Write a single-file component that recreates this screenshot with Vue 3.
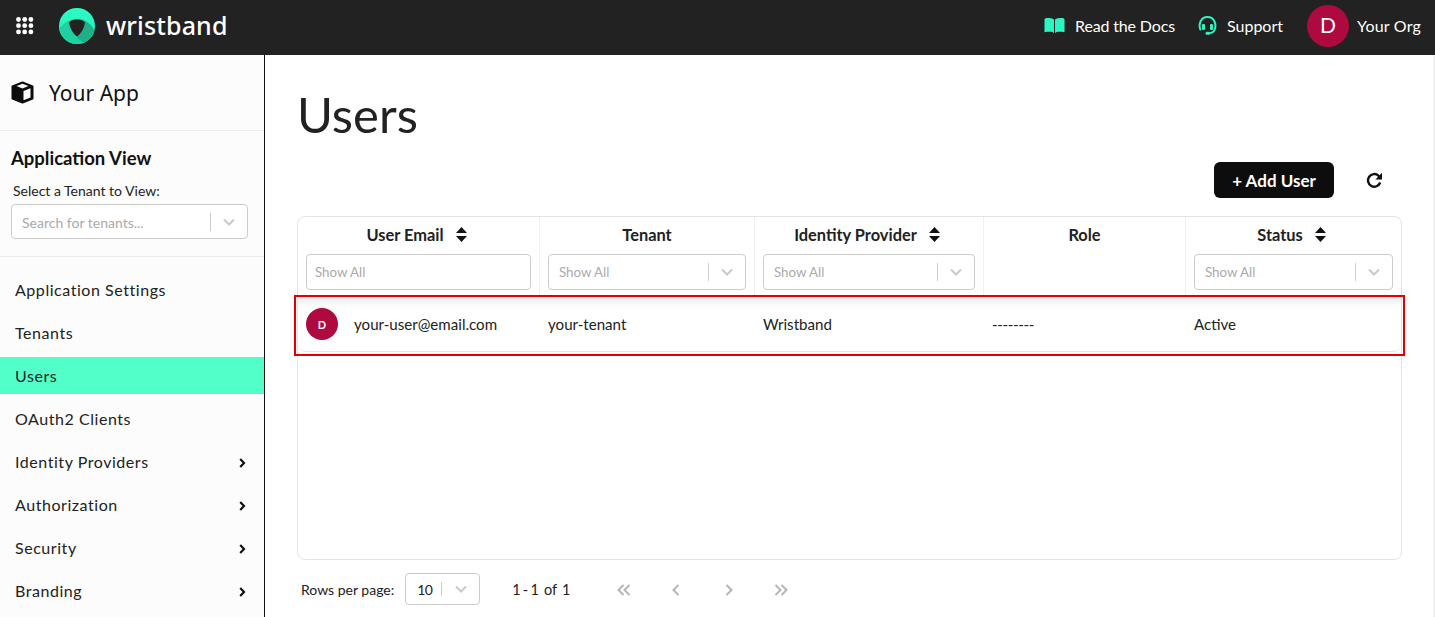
<script setup>
const nav = [
  { label: 'Application Settings' },
  { label: 'Tenants' },
  { label: 'Users', active: true },
  { label: 'OAuth2 Clients' },
  { label: 'Identity Providers', more: true },
  { label: 'Authorization', more: true },
  { label: 'Security', more: true },
  { label: 'Branding', more: true },
]
const dots = []
for (let y = 0; y < 3; y++) for (let x = 0; x < 3; x++) dots.push({ cx: 2.5 + x * 6.2, cy: 2.5 + y * 6.2 })
</script>

<template>
  <div class="page">
    <header class="topbar">
      <div class="brand">
        <svg class="grid" width="18" height="18" viewBox="0 0 18 18"><circle v-for="(d, i) in dots" :key="i" :cx="d.cx" :cy="d.cy" r="2.4" fill="#fff" /></svg>
        <svg class="logo" width="36" height="36" viewBox="0 0 36 36">
          <defs>
            <linearGradient id="lg" x1="0" y1="0" x2="0" y2="1"><stop offset="0" stop-color="#2bffc6" /><stop offset="1" stop-color="#27e6b4" /></linearGradient>
            <clipPath id="disc"><circle cx="18" cy="18" r="18" /></clipPath>
          </defs>
          <circle cx="18" cy="18" r="18" fill="url(#lg)" />
          <g clip-path="url(#disc)">
            <path d="M-1 24C3 15 10 11 18 11c4 0 7 1 10 3l8 12v12H-1z" fill="#1fd0a1" />
            <path d="M24 12c5 2 10 6 12 12v6c-2 3-5 5-9 6L18 30z" fill="#1eb088" />
          </g>
          <path d="M11 13.500c4-3 10-3 14 0 .8.600 1 1.300.8 2.300-1 5-3.500 9-7 12.300-.5.400-1.100.400-1.600 0-3.500-3.300-6-7.300-7-12.300-.2-1 0-1.700.8-2.300z" fill="#222" />
        </svg>
        <span class="wordmark">wristband</span>
      </div>
      <div class="actions">
        <span class="action docs">
          <svg width="21" height="15" viewBox="0 0 21 15"><path d="M.5 1.200C1 .4 2 0 3.500 0 6 0 8.500.3 10 1.500V15c-1-1-2.500-1.300-4-1.300-1.800 0-3.500 0-5.500.5zM20.500 1.200C20 .4 19 0 17.500 0 15 0 12.500.3 11 1.500V15c1-1 2.500-1.300 4-1.300 1.800 0 3.500 0 5.500.5z" fill="#2bf5c0" /></svg>
          Read the Docs
        </span>
        <span class="action support">
          <svg width="19" height="19" viewBox="0 0 19 19" fill="none" stroke="#2bf5c0" stroke-width="2"><path d="M2.300 13.500C.6 9 2 1 9.500 1s8.900 8 7.200 12.500c-.9 2.600-3 3.700-5.700 3.700" stroke-linecap="round" /><rect x="4" y="8" width="3" height="6" rx="1" fill="#2bf5c0" stroke="none" /><rect x="12" y="8" width="3" height="6" rx="1" fill="#2bf5c0" stroke="none" /><rect x="7.500" y="15.700" width="4.500" height="3" rx="1.500" fill="#2bf5c0" stroke="none" /></svg>
          Support
        </span>
        <span class="org"><span class="org-avatar">D</span><span class="org-name">Your Org</span></span>
      </div>
    </header>

    <div class="body">
      <aside class="sidebar">
        <div class="app-head">
          <svg width="23" height="23" viewBox="0 0 23 23"><path d="M11.500 1.500 21.500 5.500v12L11.500 21.500 1.500 17.500v-12z" fill="#0c0c0c" stroke="#0c0c0c" stroke-width="2" stroke-linejoin="round" /><path d="M11.500 2.800 17.500 5 11.500 7.400 5.500 5z" fill="#fcfcfc" /><path d="M12.500 10l7-2.800v9.300l-7 2.700z" fill="#fcfcfc" /></svg>
          <span>Your App</span>
        </div>
        <div class="view">
          <div class="view-title">Application View</div>
          <div class="view-label">Select a Tenant to View:</div>
          <div class="select tenant-select">
            <span class="ph">Search for tenants...</span>
            <i class="sep"></i>
            <svg class="chev" width="12" height="8" viewBox="0 0 12 8"><path d="M1 1.500l5 5 5-5" fill="none" stroke="#c9c9c9" stroke-width="2" /></svg>
          </div>
        </div>
        <nav class="nav">
          <div v-for="item in nav" :key="item.label" class="nav-item" :class="{ active: item.active }">
            <span>{{ item.label }}</span>
            <svg v-if="item.more" class="nav-chev" width="7" height="10" viewBox="0 0 7 10"><path d="M1.200 1l3.800 4-3.800 4" fill="none" stroke="#111" stroke-width="2.200" /></svg>
          </div>
        </nav>
      </aside>

      <main class="main">
        <h1 class="title">Users</h1>
        <div class="toolbar">
          <button class="add">+ Add User</button>
          <svg class="refresh" width="17" height="17" viewBox="0 0 17 17" fill="none"><path d="M14.200 10.500A6.300 6.300 0 1 1 12.600 3.800L14.600 5.600" stroke="#111" stroke-width="2.400" /><path d="M16 .8v6.600H9.400z" fill="#111" /></svg>
        </div>

        <div class="table">
          <div class="thead">
            <div class="th c1">
              <div class="th-label">User Email <svg class="sort" width="11" height="15" viewBox="0 0 11 15"><path d="M5.500 0 11 6H0zM5.500 15 0 9h11z" fill="#111" /></svg></div>
              <div class="select plain"><span class="ph">Show All</span></div>
            </div>
            <div class="th c2">
              <div class="th-label">Tenant</div>
              <div class="select"><span class="ph">Show All</span><i class="sep"></i><svg class="chev" width="12" height="8" viewBox="0 0 12 8"><path d="M1 1.500l5 5 5-5" fill="none" stroke="#c9c9c9" stroke-width="2" /></svg></div>
            </div>
            <div class="th c3">
              <div class="th-label">Identity Provider <svg class="sort" width="11" height="15" viewBox="0 0 11 15"><path d="M5.500 0 11 6H0zM5.500 15 0 9h11z" fill="#111" /></svg></div>
              <div class="select"><span class="ph">Show All</span><i class="sep"></i><svg class="chev" width="12" height="8" viewBox="0 0 12 8"><path d="M1 1.500l5 5 5-5" fill="none" stroke="#c9c9c9" stroke-width="2" /></svg></div>
            </div>
            <div class="th c4">
              <div class="th-label">Role</div>
            </div>
            <div class="th c5">
              <div class="th-label">Status <svg class="sort" width="11" height="15" viewBox="0 0 11 15"><path d="M5.500 0 11 6H0zM5.500 15 0 9h11z" fill="#111" /></svg></div>
              <div class="select"><span class="ph">Show All</span><i class="sep"></i><svg class="chev" width="12" height="8" viewBox="0 0 12 8"><path d="M1 1.500l5 5 5-5" fill="none" stroke="#c9c9c9" stroke-width="2" /></svg></div>
            </div>
          </div>
          <div class="row">
            <div class="td c1 user"><span class="avatar">D</span>your-user@email.com</div>
            <div class="td c2">your-tenant</div>
            <div class="td c3">Wristband</div>
            <div class="td c4 dashes">--------</div>
            <div class="td c5">Active</div>
          </div>
        </div>

        <div class="pager">
          <span class="rows-label">Rows per page:</span>
          <div class="rows-select"><span class="rows-value">10</span><i class="sep small"></i><svg width="12" height="8" viewBox="0 0 12 8"><path d="M1 1.500l5 5 5-5" fill="none" stroke="#c9c9c9" stroke-width="2" /></svg></div>
          <span class="range"><span class="range-nums">1 - 1</span><span>of</span><span>1</span></span>
          <div class="arrows">
            <svg width="14" height="12" viewBox="0 0 14 12" fill="none" stroke="#b5b5b5" stroke-width="2"><path d="M6.500 1 1.500 6l5 5M12.500 1l-5 5 5 5" /></svg>
            <svg class="prev" width="8" height="12" viewBox="0 0 8 12" fill="none" stroke="#b5b5b5" stroke-width="2"><path d="M6.500 1 1.500 6l5 5" /></svg>
            <svg class="next" width="8" height="12" viewBox="0 0 8 12" fill="none" stroke="#b5b5b5" stroke-width="2"><path d="M1.500 1l5 5-5 5" /></svg>
            <svg class="last" width="14" height="12" viewBox="0 0 14 12" fill="none" stroke="#b5b5b5" stroke-width="2"><path d="M1.500 1l5 5-5 5M7.500 1l5 5-5 5" /></svg>
          </div>
        </div>

        <div class="highlight"></div>
      </main>
      <div class="track"></div>
    </div>
  </div>
</template>

<style>
html, body { margin: 0; overflow: hidden; background: #fff; }
</style>

<style scoped>
.page { width: 1435px; height: 617px; overflow: hidden; font-family: Lato, sans-serif; color: #222; display: flex; flex-direction: column; }
.topbar { height: 55px; flex: none; background: #222; display: flex; align-items: center; justify-content: space-between; color: #fff; padding: 0 14px 4px 16px; box-sizing: border-box; }
.brand { display: flex; align-items: center; }
.logo { margin-left: 25px; }
.wordmark { margin-left: 11px; font: 500 25px/1 "Noto Sans", sans-serif; letter-spacing: .15px; color: #fff; }
.actions { display: flex; align-items: center; font-size: 16px; }
.action { display: flex; align-items: center; gap: 10px; }
.docs { letter-spacing: -.15px; }
.support { margin-left: 23px; }
.org { display: flex; align-items: center; gap: 8px; margin-left: 24px; }
.org-name { letter-spacing: .2px; }
.org-avatar { width: 42px; height: 42px; border-radius: 50%; background: #ae0a3f; display: flex; align-items: center; justify-content: center; font-size: 21px; padding-bottom: 2px; box-sizing: border-box; }

.body { flex: 1; display: flex; min-height: 0; }
.sidebar { width: 265px; flex: none; box-sizing: border-box; background: #fcfcfc; border-right: 1px solid #111; }
.app-head { height: 76px; box-sizing: border-box; border-bottom: 1px solid #ececec; display: flex; align-items: center; gap: 15px; padding-left: 11px; font: 400 21px "Noto Sans", sans-serif; color: #111; }
.view { height: 126px; box-sizing: border-box; border-bottom: 1px solid #ececec; padding: 15px 16px 0 11px; }
.view-title { font-size: 18.5px; font-weight: 700; line-height: 24px; color: #111; }
.view-label { font-size: 14px; line-height: 18px; margin: 12px 0 4px 2px; color: #222; }
.nav { padding-top: 14px; }
.nav-item { height: 37px; margin-bottom: 6px; display: flex; align-items: center; justify-content: space-between; padding: 0 18px 0 15px; font-size: 16px; letter-spacing: .55px; color: #222; }
.nav-item.active { background: #52ffc9; }
.nav-chev { margin-top: 3px; }

.select { height: 36px; box-sizing: border-box; border: 1px solid #ccc; border-radius: 4px; background: #fff; display: flex; align-items: center; padding: 0 10px; font-size: 13.3px; }
.select.plain { padding-left: 8px; }
.tenant-select { height: 35px; font-size: 14px; }
.tenant-select .ph { padding-top: 2px; }
.ph { flex: 1; color: #aaa; }
.sep { width: 1px; height: 18px; background: #ccc; }
.chev { margin: 0 2px 0 12px; }

.main { flex: 1; position: relative; padding: 0 0 0 32px; min-width: 0; background: #fff; }
.title { margin: 0; padding-top: 28px; font-size: 49px; font-weight: 400; line-height: 62px; color: #222; }
.toolbar { display: flex; align-items: center; justify-content: flex-end; height: 36px; margin-top: 17px; padding-right: 52px; gap: 32px; }
.add { width: 120px; height: 36px; border: 0; border-radius: 6px; background: #0d0d0d; color: #fff; font: 700 17px Lato, sans-serif; }
.table { width: 1105px; height: 344px; margin-top: 18px; box-sizing: border-box; border: 1px solid #e4e4e4; border-radius: 8px; background: #fff; }
.thead { display: grid; grid-template-columns: 241px 215px 229px 202px 1fr; height: 80px; }
.th { border-left: 1px solid #f0f0f0; padding: 0 8px; box-sizing: border-box; }
.th:first-child { border-left: 0; }
.th-label { height: 34px; margin-bottom: 3px; display: flex; align-items: center; justify-content: center; gap: 12px; font-size: 16.4px; font-weight: 700; color: #222; }
.sort { margin-right: 4px; }
.row { display: grid; grid-template-columns: 241px 215px 229px 202px 1fr; height: 54px; align-items: center; border-bottom: 1px solid #e6e6e6; border-radius: 0 0 8px 8px; box-shadow: inset 0 12px 12px -10px rgba(0,0,0,.13); font-size: 15.1px; color: #222; }
.td { padding-left: 9px; padding-right: 8px; }
.user { display: flex; align-items: center; gap: 16px; padding-left: 8px; }
.dashes { letter-spacing: -.35px; }
.avatar { width: 32px; height: 32px; border-radius: 50%; background: #ae0a3f; color: #fff; font-size: 11px; font-weight: 700; display: flex; align-items: center; justify-content: center; }

.pager { display: flex; align-items: center; height: 32px; margin-top: 13px; padding-left: 4px; font-size: 14px; color: #222; }
.rows-select { width: 75px; height: 32px; margin-left: 11px; box-sizing: border-box; border: 1px solid #ccc; border-radius: 4px; display: flex; align-items: center; padding-left: 11px; font-size: 14px; }
.rows-value { letter-spacing: -.5px; }
.sep.small { height: 14px; margin: 0 13px 0 9px; }
.range { display: flex; gap: 5px; margin-left: 32px; font-size: 14.5px; }
.range-nums { word-spacing: -1.5px; }
.arrows { display: flex; align-items: center; margin-left: 47px; padding-top: 2px; }
.prev { margin-left: 41px; }
.next { margin-left: 45px; }
.last { margin-left: 41px; }

.highlight { position: absolute; left: 29px; top: 240px; width: 1111px; height: 61px; box-sizing: border-box; border: 2px solid #e30000; pointer-events: none; }
.track { position: absolute; right: 0; top: 55px; bottom: 0; width: 2px; background: #f1f1f1; }
</style>
